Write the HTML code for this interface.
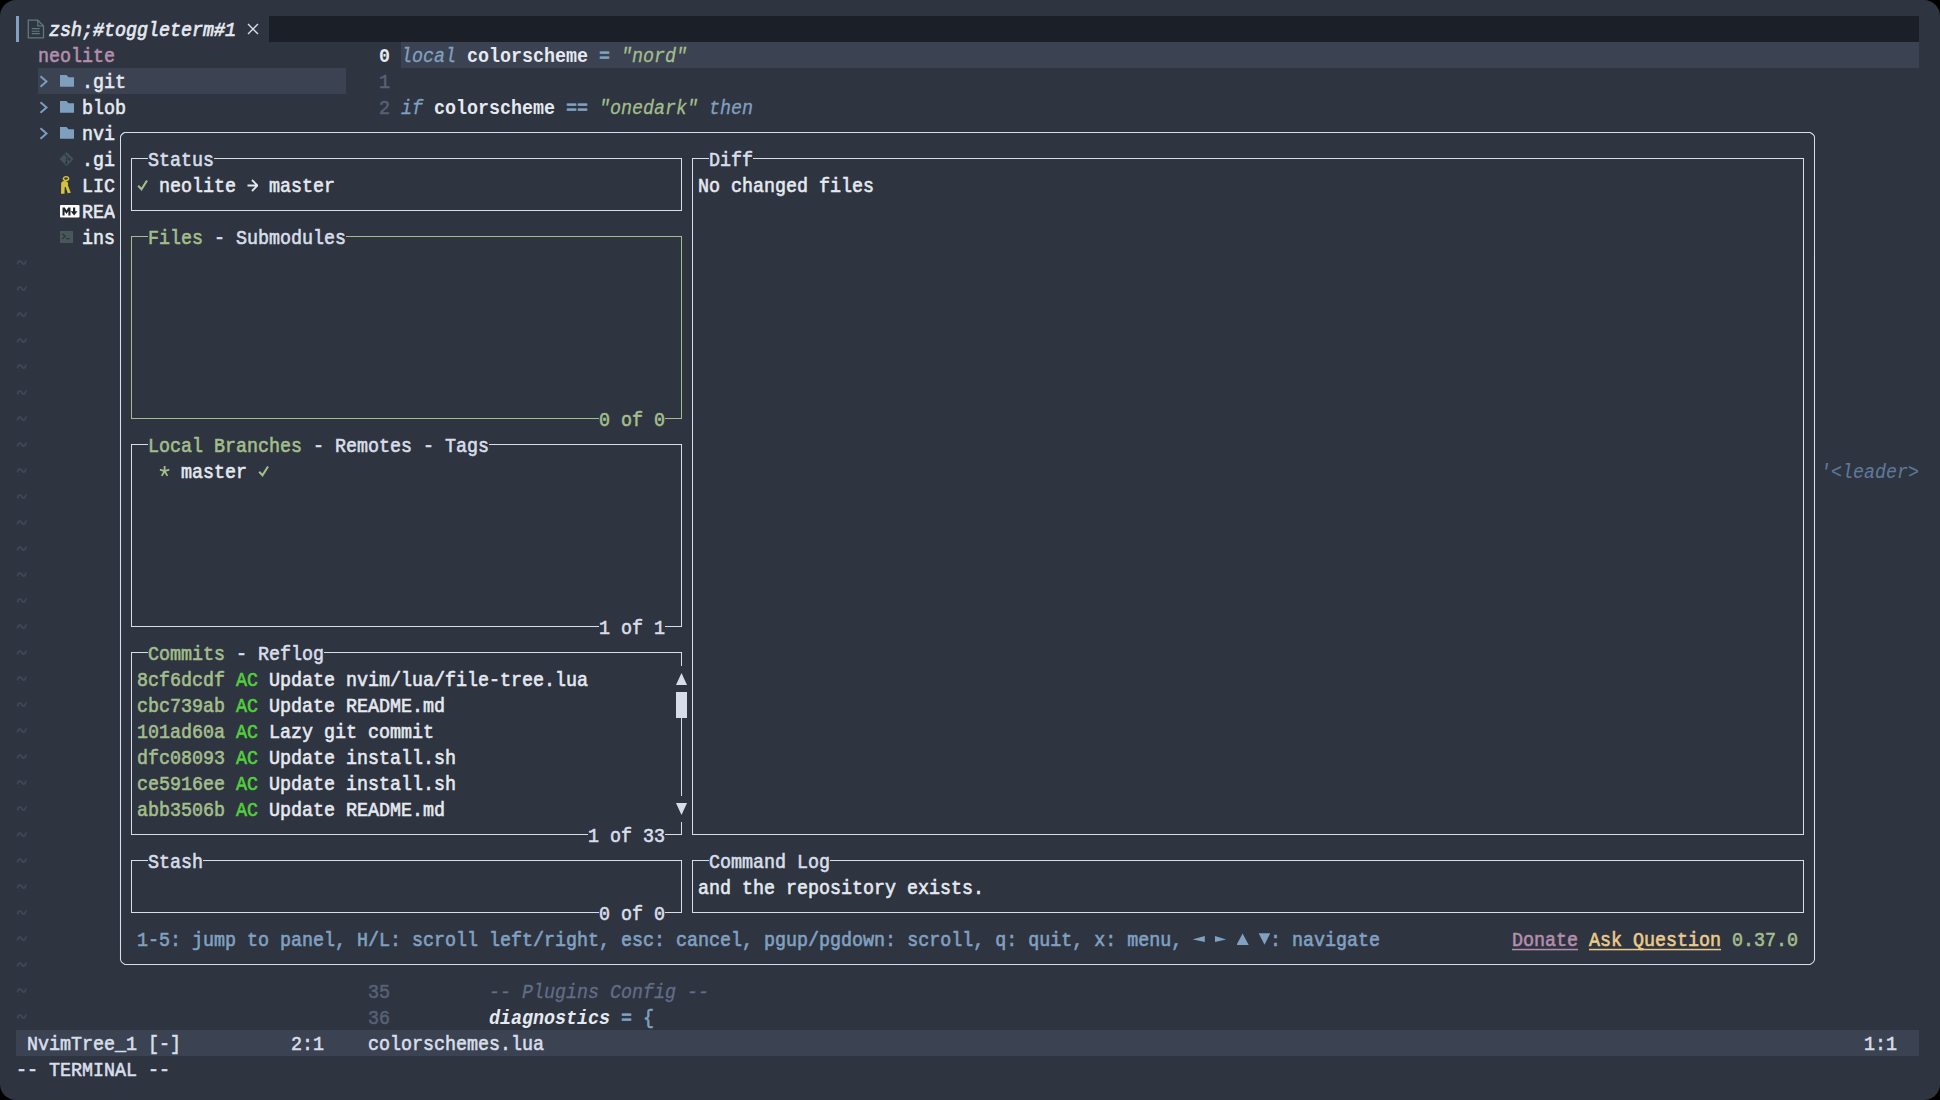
<!DOCTYPE html>
<html><head><meta charset="utf-8">
<style>
html,body{margin:0;padding:0;background:#000;}
#term{position:relative;width:1940px;height:1100px;background:#2E3440;border-radius:16px;overflow:hidden;
font-family:"Liberation Mono",monospace;font-size:20px;letter-spacing:0px;}
.t{position:absolute;white-space:pre;line-height:26px;height:26px;transform:scaleX(0.9166667);transform-origin:0 0;}
.r{position:absolute;}
</style></head><body><div id="term">
<div class="r" style="left:16px;top:16px;width:3px;height:26px;background:#81A1C1;"></div>
<svg class="r" style="left:26.5px;top:19px" width="18" height="21" viewBox="0 0 18 21">
<path d="M1.3 1.2 H10.8 L16.5 6.9 V18.9 H1.3 Z" fill="none" stroke="#5F7C7B" stroke-width="1.3"/>
<path d="M10.8 1.2 V6.9 H16.5" fill="none" stroke="#5F7C7B" stroke-width="1.2"/>
<path d="M4.7 9.6 H12.7 M4.7 12.2 H12.7 M4.7 14.6 H12.7" stroke="#5F7C7B" stroke-width="1.1"/>
</svg>
<div class="t" style="left:49px;top:18px;color:#E5E9F0;-webkit-text-stroke:0.7px #E5E9F0;font-style:italic;">zsh;#toggleterm#1</div>
<svg class="r" style="left:247px;top:23px" width="12" height="12" viewBox="0 0 12 12">
<path d="M1 1 L11 11 M11 1 L1 11" stroke="#D8DEE9" stroke-width="1.4"/>
</svg>
<div class="r" style="left:269px;top:16px;width:1650px;height:26px;background:#1B1F27;"></div>
<div class="t" style="left:38px;top:44px;color:#B48EAD;-webkit-text-stroke:0.6px #B48EAD;">neolite</div>
<div class="r" style="left:38px;top:68px;width:308px;height:26px;background:#3B4252;"></div>
<svg class="r" style="left:39px;top:75px" width="10" height="13" viewBox="0 0 10 13">
<path d="M1.5 1.2 L7.5 6.5 L1.5 11.8" fill="none" stroke="#7B9CC0" stroke-width="2"/>
</svg>
<svg class="r" style="left:60px;top:75px" width="15" height="13" viewBox="0 0 15 13">
<path d="M0 0 H6.5 L8.5 2.3 H14 V11.8 H0 Z" fill="#7F9FBF"/>
</svg>
<div class="t" style="left:82px;top:70px;color:#E5E9F0;-webkit-text-stroke:0.6px #E5E9F0;">.git</div>
<svg class="r" style="left:39px;top:101px" width="10" height="13" viewBox="0 0 10 13">
<path d="M1.5 1.2 L7.5 6.5 L1.5 11.8" fill="none" stroke="#7B9CC0" stroke-width="2"/>
</svg>
<svg class="r" style="left:60px;top:101px" width="15" height="13" viewBox="0 0 15 13">
<path d="M0 0 H6.5 L8.5 2.3 H14 V11.8 H0 Z" fill="#7F9FBF"/>
</svg>
<div class="t" style="left:82px;top:96px;color:#E5E9F0;-webkit-text-stroke:0.6px #E5E9F0;">blob</div>
<svg class="r" style="left:39px;top:127px" width="10" height="13" viewBox="0 0 10 13">
<path d="M1.5 1.2 L7.5 6.5 L1.5 11.8" fill="none" stroke="#7B9CC0" stroke-width="2"/>
</svg>
<svg class="r" style="left:60px;top:127px" width="15" height="13" viewBox="0 0 15 13">
<path d="M0 0 H6.5 L8.5 2.3 H14 V11.8 H0 Z" fill="#7F9FBF"/>
</svg>
<div class="t" style="left:82px;top:122px;color:#E5E9F0;-webkit-text-stroke:0.6px #E5E9F0;">nvi</div>
<svg class="r" style="left:59px;top:151px" width="16" height="16" viewBox="0 0 16 16">
<path d="M7.5 1.2 L14.3 8 L7.5 14.9 L0.8 8 Z" fill="#43545B" stroke="#43545B" stroke-width="0.6" stroke-linejoin="round"/>
<path d="M5.6 3.4 L10.2 8.2 M7.4 7.2 V12" stroke="#2E3440" stroke-width="1.3"/>
<circle cx="10.3" cy="8.4" r="1.3" fill="#2E3440"/>
<circle cx="7.4" cy="12" r="1.2" fill="#2E3440"/>
</svg>
<div class="t" style="left:82px;top:148px;color:#E5E9F0;-webkit-text-stroke:0.6px #E5E9F0;">.gi</div>
<svg class="r" style="left:56px;top:174px" width="20" height="22" viewBox="0 0 20 22">
<ellipse cx="10" cy="4.6" rx="2.6" ry="1.9" fill="none" stroke="#D3BF38" stroke-width="1.5"/>
<ellipse cx="8.6" cy="10" rx="3.5" ry="3.1" fill="#D6C23C"/>
<path d="M5.2 11 L8.8 11 L8.5 19.7 L5 19.7 Z" fill="#D6C23C"/>
<path d="M9.2 11.5 L11.9 11.3 L14.8 18.8 L11.7 19.3 Z" fill="#D6C23C"/>
</svg>
<div class="t" style="left:82px;top:174px;color:#E5E9F0;-webkit-text-stroke:0.6px #E5E9F0;">LIC</div>
<svg class="r" style="left:60px;top:205px" width="20" height="13" viewBox="0 0 20 13">
<rect x="0" y="0" width="19.5" height="12.5" rx="1" fill="#FFFFFF"/>
<path d="M2.5 10.5 V2.5 H4.8 L6.5 5.5 L8.2 2.5 H10.5 V10.5 H8.4 V6.2 L6.5 9 L4.6 6.2 V10.5 Z" fill="#20242C"/>
<path d="M13 2.5 H15.2 V6.3 H17.5 L14.1 10.5 L10.7 6.3 H13 Z" fill="#20242C"/>
</svg>
<div class="t" style="left:82px;top:200px;color:#E5E9F0;-webkit-text-stroke:0.6px #E5E9F0;">REA</div>
<svg class="r" style="left:60px;top:231px" width="14" height="13" viewBox="0 0 14 13">
<rect x="0" y="0" width="13" height="12" fill="#485757"/>
<path d="M2.4 2.8 L5.2 5.3 L2.4 7.8" fill="none" stroke="#2E3440" stroke-width="1.2"/>
<path d="M6.2 7.6 H9.8" stroke="#2E3440" stroke-width="1.2"/>
</svg>
<div class="t" style="left:82px;top:226px;color:#E5E9F0;-webkit-text-stroke:0.6px #E5E9F0;">ins</div>
<svg class="r" style="left:0;top:0" width="40" height="1100"><path d="M17.6 264.5 C17.6 260.5 20.5 260 21.7 262.5 S25.8 264.5 25.8 260.5 M17.6 290.5 C17.6 286.5 20.5 286 21.7 288.5 S25.8 290.5 25.8 286.5 M17.6 316.5 C17.6 312.5 20.5 312 21.7 314.5 S25.8 316.5 25.8 312.5 M17.6 342.5 C17.6 338.5 20.5 338 21.7 340.5 S25.8 342.5 25.8 338.5 M17.6 368.5 C17.6 364.5 20.5 364 21.7 366.5 S25.8 368.5 25.8 364.5 M17.6 394.5 C17.6 390.5 20.5 390 21.7 392.5 S25.8 394.5 25.8 390.5 M17.6 420.5 C17.6 416.5 20.5 416 21.7 418.5 S25.8 420.5 25.8 416.5 M17.6 446.5 C17.6 442.5 20.5 442 21.7 444.5 S25.8 446.5 25.8 442.5 M17.6 472.5 C17.6 468.5 20.5 468 21.7 470.5 S25.8 472.5 25.8 468.5 M17.6 498.5 C17.6 494.5 20.5 494 21.7 496.5 S25.8 498.5 25.8 494.5 M17.6 524.5 C17.6 520.5 20.5 520 21.7 522.5 S25.8 524.5 25.8 520.5 M17.6 550.5 C17.6 546.5 20.5 546 21.7 548.5 S25.8 550.5 25.8 546.5 M17.6 576.5 C17.6 572.5 20.5 572 21.7 574.5 S25.8 576.5 25.8 572.5 M17.6 602.5 C17.6 598.5 20.5 598 21.7 600.5 S25.8 602.5 25.8 598.5 M17.6 628.5 C17.6 624.5 20.5 624 21.7 626.5 S25.8 628.5 25.8 624.5 M17.6 654.5 C17.6 650.5 20.5 650 21.7 652.5 S25.8 654.5 25.8 650.5 M17.6 680.5 C17.6 676.5 20.5 676 21.7 678.5 S25.8 680.5 25.8 676.5 M17.6 706.5 C17.6 702.5 20.5 702 21.7 704.5 S25.8 706.5 25.8 702.5 M17.6 732.5 C17.6 728.5 20.5 728 21.7 730.5 S25.8 732.5 25.8 728.5 M17.6 758.5 C17.6 754.5 20.5 754 21.7 756.5 S25.8 758.5 25.8 754.5 M17.6 784.5 C17.6 780.5 20.5 780 21.7 782.5 S25.8 784.5 25.8 780.5 M17.6 810.5 C17.6 806.5 20.5 806 21.7 808.5 S25.8 810.5 25.8 806.5 M17.6 836.5 C17.6 832.5 20.5 832 21.7 834.5 S25.8 836.5 25.8 832.5 M17.6 862.5 C17.6 858.5 20.5 858 21.7 860.5 S25.8 862.5 25.8 858.5 M17.6 888.5 C17.6 884.5 20.5 884 21.7 886.5 S25.8 888.5 25.8 884.5 M17.6 914.5 C17.6 910.5 20.5 910 21.7 912.5 S25.8 914.5 25.8 910.5 M17.6 940.5 C17.6 936.5 20.5 936 21.7 938.5 S25.8 940.5 25.8 936.5 M17.6 966.5 C17.6 962.5 20.5 962 21.7 964.5 S25.8 966.5 25.8 962.5 M17.6 992.5 C17.6 988.5 20.5 988 21.7 990.5 S25.8 992.5 25.8 988.5 M17.6 1018.5 C17.6 1014.5 20.5 1014 21.7 1016.5 S25.8 1018.5 25.8 1014.5" fill="none" stroke="#3E4757" stroke-width="1.9"/></svg>
<div class="r" style="left:401px;top:42px;width:1518px;height:26px;background:#3B4252;"></div>
<div class="t" style="left:379px;top:44px;color:#E5E9F0;font-weight:bold;">0</div>
<div class="t" style="left:401px;top:44px;color:#81A1C1;-webkit-text-stroke:0.3px #81A1C1;font-style:italic;">local</div>
<div class="t" style="left:467px;top:44px;color:#E5E9F0;font-weight:bold;">colorscheme</div>
<div class="t" style="left:599px;top:44px;color:#81A1C1;-webkit-text-stroke:0.6px #81A1C1;">=</div>
<div class="t" style="left:621px;top:44px;color:#A3BE8C;-webkit-text-stroke:0.3px #A3BE8C;font-style:italic;">&quot;nord&quot;</div>
<div class="t" style="left:379px;top:70px;color:#566176;-webkit-text-stroke:0.6px #566176;">1</div>
<div class="t" style="left:379px;top:96px;color:#566176;-webkit-text-stroke:0.6px #566176;">2</div>
<div class="t" style="left:401px;top:96px;color:#81A1C1;-webkit-text-stroke:0.3px #81A1C1;font-style:italic;">if</div>
<div class="t" style="left:434px;top:96px;color:#E5E9F0;font-weight:bold;">colorscheme</div>
<div class="t" style="left:566px;top:96px;color:#81A1C1;-webkit-text-stroke:0.6px #81A1C1;">==</div>
<div class="t" style="left:599px;top:96px;color:#A3BE8C;-webkit-text-stroke:0.3px #A3BE8C;font-style:italic;">&quot;onedark&quot;</div>
<div class="t" style="left:709px;top:96px;color:#81A1C1;-webkit-text-stroke:0.3px #81A1C1;font-style:italic;">then</div>
<div class="t" style="left:1820px;top:460px;color:#5E7999;-webkit-text-stroke:0.15px #5E7999;font-style:italic;">&#x27;&lt;leader&gt;</div>
<div class="t" style="left:368px;top:980px;color:#566176;-webkit-text-stroke:0.6px #566176;">35</div>
<div class="t" style="left:489px;top:980px;color:#616E88;-webkit-text-stroke:0.3px #616E88;font-style:italic;">-- Plugins Config --</div>
<div class="t" style="left:368px;top:1006px;color:#566176;-webkit-text-stroke:0.6px #566176;">36</div>
<div class="t" style="left:489px;top:1006px;color:#E5E9F0;font-weight:bold;font-style:italic;">diagnostics</div>
<div class="t" style="left:621px;top:1006px;color:#81A1C1;-webkit-text-stroke:0.6px #81A1C1;">=</div>
<div class="t" style="left:643px;top:1006px;color:#81A1C1;-webkit-text-stroke:0.6px #81A1C1;">{</div>
<div class="r" style="left:16px;top:1030px;width:1903px;height:26px;background:#3B4252;"></div>
<div class="t" style="left:27px;top:1032px;color:#D8DEE9;-webkit-text-stroke:0.6px #D8DEE9;">NvimTree_1 [-]</div>
<div class="t" style="left:291px;top:1032px;color:#D8DEE9;-webkit-text-stroke:0.6px #D8DEE9;">2:1</div>
<div class="t" style="left:368px;top:1032px;color:#D8DEE9;-webkit-text-stroke:0.6px #D8DEE9;">colorschemes.lua</div>
<div class="t" style="left:1864px;top:1032px;color:#D8DEE9;-webkit-text-stroke:0.6px #D8DEE9;">1:1</div>
<div class="t" style="left:16px;top:1058px;color:#D8DEE9;-webkit-text-stroke:0.6px #D8DEE9;">-- TERMINAL --</div>
<div class="r" style="left:115px;top:120px;width:1705px;height:858px;background:#2E3440;"></div>
<svg class="r" style="left:0;top:0" width="1940" height="1100" viewBox="0 0 1940 1100">
<path d="M120.5 137 Q120.8 134.5 124.5 132.5 H1810 Q1814.2 134.5 1814.5 137 V959.5 Q1814.2 962.5 1810 964.5 H125 Q120.8 962.5 120.5 959.5 Z" fill="none" stroke="#D8DEE9" stroke-width="1.05"/>
</svg>
<div class="r" style="left:131px;top:158px;width:17px;height:1px;background:#D8DEE9;"></div>
<div class="r" style="left:214px;top:158px;width:468px;height:1px;background:#D8DEE9;"></div>
<div class="t" style="left:148px;top:148px;color:#D8DEE9;-webkit-text-stroke:0.6px #D8DEE9;">Status</div>
<div class="r" style="left:131px;top:210px;width:551px;height:1px;background:#D8DEE9;"></div>
<div class="r" style="left:131px;top:158px;width:1px;height:53px;background:#D8DEE9;"></div>
<div class="r" style="left:681px;top:158px;width:1px;height:53px;background:#D8DEE9;"></div>
<svg class="r" style="left:137px;top:179px" width="11" height="12" viewBox="0 0 11 12">
<path d="M1.2 6.8 L4.5 10.2 L10 1.5" fill="none" stroke="#A3BE8C" stroke-width="2.1"/>
</svg>
<div class="t" style="left:159px;top:174px;color:#E5E9F0;-webkit-text-stroke:0.6px #E5E9F0;">neolite</div>
<div class="t" style="left:269px;top:174px;color:#E5E9F0;-webkit-text-stroke:0.6px #E5E9F0;">master</div>
<svg class="r" style="left:247px;top:172px" width="11" height="26" viewBox="0 0 11 26">
<path d="M0.5 13.5 H10.5 M5 8 L10.5 13.5 L5 19" fill="none" stroke="#E5E9F0" stroke-width="1.8"/>
</svg>
<div class="r" style="left:131px;top:236px;width:17px;height:1px;background:#A3BE8C;"></div>
<div class="r" style="left:346px;top:236px;width:336px;height:1px;background:#A3BE8C;"></div>
<div class="t" style="left:148px;top:226px;color:#A3BE8C;-webkit-text-stroke:0.6px #A3BE8C;">Files</div>
<div class="t" style="left:203px;top:226px;color:#D8DEE9;-webkit-text-stroke:0.6px #D8DEE9;"> - Submodules</div>
<div class="r" style="left:131px;top:418px;width:468px;height:1px;background:#A3BE8C;"></div>
<div class="r" style="left:665px;top:418px;width:17px;height:1px;background:#A3BE8C;"></div>
<div class="t" style="left:599px;top:408px;color:#A3BE8C;-webkit-text-stroke:0.6px #A3BE8C;">0 of 0</div>
<div class="r" style="left:131px;top:236px;width:1px;height:183px;background:#A3BE8C;"></div>
<div class="r" style="left:681px;top:236px;width:1px;height:183px;background:#A3BE8C;"></div>
<div class="r" style="left:131px;top:444px;width:17px;height:1px;background:#D8DEE9;"></div>
<div class="r" style="left:489px;top:444px;width:193px;height:1px;background:#D8DEE9;"></div>
<div class="t" style="left:148px;top:434px;color:#A3BE8C;-webkit-text-stroke:0.6px #A3BE8C;">Local Branches</div>
<div class="t" style="left:302px;top:434px;color:#D8DEE9;-webkit-text-stroke:0.6px #D8DEE9;"> - Remotes - Tags</div>
<div class="r" style="left:131px;top:626px;width:468px;height:1px;background:#D8DEE9;"></div>
<div class="r" style="left:665px;top:626px;width:17px;height:1px;background:#D8DEE9;"></div>
<div class="t" style="left:599px;top:616px;color:#D8DEE9;-webkit-text-stroke:0.6px #D8DEE9;">1 of 1</div>
<div class="r" style="left:131px;top:444px;width:1px;height:183px;background:#D8DEE9;"></div>
<div class="r" style="left:681px;top:444px;width:1px;height:183px;background:#D8DEE9;"></div>
<svg class="r" style="left:159px;top:458px" width="11" height="26" viewBox="0 0 11 26">
<path d="M5.6 13.2 V7.9 M5.6 13.2 L0.9 11.6 M5.6 13.2 L10.3 11.6 M5.6 13.2 L2.7 17.9 M5.6 13.2 L8.5 17.9" stroke="#A3BE8C" stroke-width="1.8" fill="none"/>
</svg>
<div class="t" style="left:181px;top:460px;color:#E5E9F0;-webkit-text-stroke:0.6px #E5E9F0;">master</div>
<svg class="r" style="left:258px;top:465px" width="11" height="12" viewBox="0 0 11 12">
<path d="M1.2 6.8 L4.5 10.2 L10 1.5" fill="none" stroke="#A3BE8C" stroke-width="2.1"/>
</svg>
<div class="r" style="left:131px;top:652px;width:17px;height:1px;background:#D8DEE9;"></div>
<div class="r" style="left:324px;top:652px;width:358px;height:1px;background:#D8DEE9;"></div>
<div class="t" style="left:148px;top:642px;color:#A3BE8C;-webkit-text-stroke:0.6px #A3BE8C;">Commits</div>
<div class="t" style="left:225px;top:642px;color:#D8DEE9;-webkit-text-stroke:0.6px #D8DEE9;"> - Reflog</div>
<div class="r" style="left:131px;top:834px;width:457px;height:1px;background:#D8DEE9;"></div>
<div class="r" style="left:665px;top:834px;width:17px;height:1px;background:#D8DEE9;"></div>
<div class="t" style="left:588px;top:824px;color:#D8DEE9;-webkit-text-stroke:0.6px #D8DEE9;">1 of 33</div>
<div class="r" style="left:131px;top:652px;width:1px;height:183px;background:#D8DEE9;"></div>
<div class="t" style="left:137px;top:668px;color:#A3BE8C;-webkit-text-stroke:0.6px #A3BE8C;">8cf6dcdf</div>
<div class="t" style="left:236px;top:668px;color:#52D03C;-webkit-text-stroke:0.6px #52D03C;">AC</div>
<div class="t" style="left:269px;top:668px;color:#E5E9F0;-webkit-text-stroke:0.6px #E5E9F0;">Update nvim/lua/file-tree.lua</div>
<div class="t" style="left:137px;top:694px;color:#A3BE8C;-webkit-text-stroke:0.6px #A3BE8C;">cbc739ab</div>
<div class="t" style="left:236px;top:694px;color:#52D03C;-webkit-text-stroke:0.6px #52D03C;">AC</div>
<div class="t" style="left:269px;top:694px;color:#E5E9F0;-webkit-text-stroke:0.6px #E5E9F0;">Update README.md</div>
<div class="t" style="left:137px;top:720px;color:#A3BE8C;-webkit-text-stroke:0.6px #A3BE8C;">101ad60a</div>
<div class="t" style="left:236px;top:720px;color:#52D03C;-webkit-text-stroke:0.6px #52D03C;">AC</div>
<div class="t" style="left:269px;top:720px;color:#E5E9F0;-webkit-text-stroke:0.6px #E5E9F0;">Lazy git commit</div>
<div class="t" style="left:137px;top:746px;color:#A3BE8C;-webkit-text-stroke:0.6px #A3BE8C;">dfc08093</div>
<div class="t" style="left:236px;top:746px;color:#52D03C;-webkit-text-stroke:0.6px #52D03C;">AC</div>
<div class="t" style="left:269px;top:746px;color:#E5E9F0;-webkit-text-stroke:0.6px #E5E9F0;">Update install.sh</div>
<div class="t" style="left:137px;top:772px;color:#A3BE8C;-webkit-text-stroke:0.6px #A3BE8C;">ce5916ee</div>
<div class="t" style="left:236px;top:772px;color:#52D03C;-webkit-text-stroke:0.6px #52D03C;">AC</div>
<div class="t" style="left:269px;top:772px;color:#E5E9F0;-webkit-text-stroke:0.6px #E5E9F0;">Update install.sh</div>
<div class="t" style="left:137px;top:798px;color:#A3BE8C;-webkit-text-stroke:0.6px #A3BE8C;">abb3506b</div>
<div class="t" style="left:236px;top:798px;color:#52D03C;-webkit-text-stroke:0.6px #52D03C;">AC</div>
<div class="t" style="left:269px;top:798px;color:#E5E9F0;-webkit-text-stroke:0.6px #E5E9F0;">Update README.md</div>
<div class="r" style="left:681px;top:652px;width:1px;height:14px;background:#D8DEE9;"></div>
<svg class="r" style="left:676px;top:666px" width="11" height="26" viewBox="0 0 11 26">
<path d="M0 19 L5.5 7 L11 19 Z" fill="#D8DEE9"/></svg>
<div class="r" style="left:676px;top:692px;width:11px;height:26px;background:#D8DEE9;"></div>
<div class="r" style="left:681px;top:718px;width:1px;height:78px;background:#D8DEE9;"></div>
<svg class="r" style="left:676px;top:796px" width="11" height="26" viewBox="0 0 11 26">
<path d="M0 7 L5.5 19 L11 7 Z" fill="#D8DEE9"/></svg>
<div class="r" style="left:681px;top:822px;width:1px;height:13px;background:#D8DEE9;"></div>
<div class="r" style="left:131px;top:860px;width:17px;height:1px;background:#D8DEE9;"></div>
<div class="r" style="left:203px;top:860px;width:479px;height:1px;background:#D8DEE9;"></div>
<div class="t" style="left:148px;top:850px;color:#D8DEE9;-webkit-text-stroke:0.6px #D8DEE9;">Stash</div>
<div class="r" style="left:131px;top:912px;width:468px;height:1px;background:#D8DEE9;"></div>
<div class="r" style="left:665px;top:912px;width:17px;height:1px;background:#D8DEE9;"></div>
<div class="t" style="left:599px;top:902px;color:#D8DEE9;-webkit-text-stroke:0.6px #D8DEE9;">0 of 0</div>
<div class="r" style="left:131px;top:860px;width:1px;height:53px;background:#D8DEE9;"></div>
<div class="r" style="left:681px;top:860px;width:1px;height:53px;background:#D8DEE9;"></div>
<div class="r" style="left:692px;top:158px;width:17px;height:1px;background:#D8DEE9;"></div>
<div class="r" style="left:753px;top:158px;width:1051px;height:1px;background:#D8DEE9;"></div>
<div class="t" style="left:709px;top:148px;color:#D8DEE9;-webkit-text-stroke:0.6px #D8DEE9;">Diff</div>
<div class="r" style="left:692px;top:834px;width:1112px;height:1px;background:#D8DEE9;"></div>
<div class="r" style="left:692px;top:158px;width:1px;height:677px;background:#D8DEE9;"></div>
<div class="r" style="left:1803px;top:158px;width:1px;height:677px;background:#D8DEE9;"></div>
<div class="t" style="left:698px;top:174px;color:#E5E9F0;-webkit-text-stroke:0.6px #E5E9F0;">No changed files</div>
<div class="r" style="left:692px;top:860px;width:17px;height:1px;background:#D8DEE9;"></div>
<div class="r" style="left:830px;top:860px;width:974px;height:1px;background:#D8DEE9;"></div>
<div class="t" style="left:709px;top:850px;color:#D8DEE9;-webkit-text-stroke:0.6px #D8DEE9;">Command Log</div>
<div class="r" style="left:692px;top:912px;width:1112px;height:1px;background:#D8DEE9;"></div>
<div class="r" style="left:692px;top:860px;width:1px;height:53px;background:#D8DEE9;"></div>
<div class="r" style="left:1803px;top:860px;width:1px;height:53px;background:#D8DEE9;"></div>
<div class="t" style="left:698px;top:876px;color:#E5E9F0;-webkit-text-stroke:0.6px #E5E9F0;">and the repository exists.</div>
<div class="t" style="left:137px;top:928px;color:#81A1C1;-webkit-text-stroke:0.6px #81A1C1;">1-5: jump to panel, H/L: scroll left/right, esc: cancel, pgup/pgdown: scroll, q: quit, x: menu,</div>
<div class="t" style="left:1270px;top:928px;color:#81A1C1;-webkit-text-stroke:0.6px #81A1C1;">: navigate</div>
<svg class="r" style="left:1193px;top:926px" width="44" height="26" viewBox="0 0 44 26">
<path d="M-0.3 13.4 L11.8 10 V16 Z" fill="#81A1C1"/>
<path d="M22 10 V16 L33.2 13.4 Z" fill="#81A1C1"/>
</svg>
<svg class="r" style="left:1237px;top:926px" width="33" height="26" viewBox="0 0 33 26">
<path d="M-0.5 19 L5.6 7.5 L11.7 19 Z" fill="#81A1C1"/>
<path d="M21.7 7.2 H33.3 L27.5 18.8 Z" fill="#81A1C1"/>
</svg>
<div class="t" style="left:1512px;top:928px;color:#B48EAD;-webkit-text-stroke:0.6px #B48EAD;">Donate</div>
<div class="t" style="left:1589px;top:928px;color:#EBCB8B;-webkit-text-stroke:0.6px #EBCB8B;">Ask Question</div>
<svg class="r" style="left:0;top:940px" width="1940" height="20"><rect x="1512" y="8.8" width="66" height="1.5" fill="#B48EAD"/><rect x="1589" y="8.8" width="132" height="1.5" fill="#EBCB8B"/></svg>
<div class="t" style="left:1732px;top:928px;color:#A3BE8C;-webkit-text-stroke:0.6px #A3BE8C;">0.37.0</div>
</div></body></html>
